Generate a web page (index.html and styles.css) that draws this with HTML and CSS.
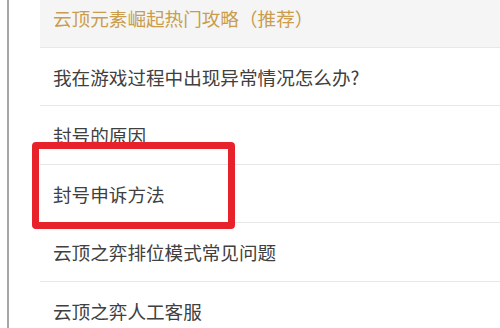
FILE: index.html
```html
<!DOCTYPE html>
<html lang="zh-CN">
<head>
<meta charset="utf-8">
<link rel="stylesheet" href="styles.css">
</head>
<body>
<div class="page">
  <div class="panel">
    <ul class="list">
      <li class="item item-hot">云顶元素崛起热门攻略（推荐）</li>
      <li class="item">我在游戏过程中出现异常情况怎么办?</li>
      <li class="item">封号的原因</li>
      <li class="item">封号申诉方法</li>
      <li class="item">云顶之弈排位模式常见问题</li>
      <li class="item">云顶之弈人工客服</li>
    </ul>
  </div>
  <div class="highlight"></div>
</div>
</body>
</html>
```
FILE: styles.css
```css
html, body {
  margin: 0;
  padding: 0;
  background: #ffffff;
}
.page {
  position: relative;
  width: 500px;
  height: 328px;
  overflow: hidden;
  padding-left: 7px;
  box-sizing: border-box;
  font-family: "Noto Sans CJK SC", "Noto Sans", sans-serif;
}
.panel {
  display: flow-root;
  height: 100%;
  border-left: 2px solid #a6a6a6;
  padding-left: 31px;
}
.list {
  list-style: none;
  margin: -11px 0 0 0;
  padding: 0;
}
.item {
  height: 57.5px;
  border-bottom: 1px solid #e8e8e8;
  display: flex;
  align-items: center;
  padding-left: 13px;
  font-size: 18.6px;
  color: #404040;
  white-space: nowrap;
}
.item-hot {
  background: #f5f5f5;
  color: #c99d4c;
}
.highlight {
  position: absolute;
  left: 32px;
  top: 142px;
  width: 203px;
  height: 87px;
  box-sizing: border-box;
  border: 7px solid #e8222b;
  border-radius: 4px;
}
```
